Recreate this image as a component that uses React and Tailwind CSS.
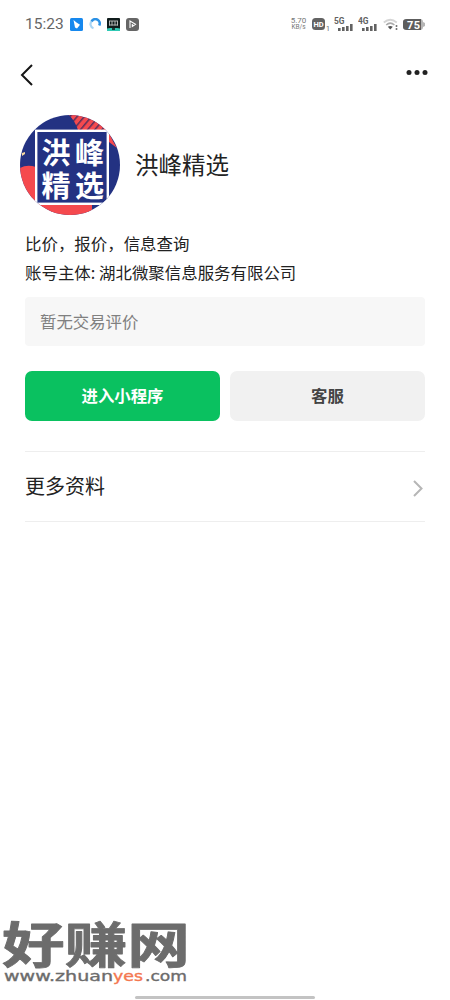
import React from 'react';

const SignalBars = ({ label }) => (
    <svg width="20" height="15" viewBox="0 0 20 15" fill="#626262">
        <text x="0" y="7" fontSize="8.5" fontWeight="700" textLength="10.5" lengthAdjust="spacingAndGlyphs">{label}</text>
        <rect x="4" y="11" width="2.6" height="3" />
        <rect x="8" y="10" width="2.6" height="4" />
        <rect x="12" y="9" width="2.6" height="5" />
        <rect x="16" y="7" width="2.6" height="7" />
    </svg>
);

const StatusBar = () => (
    <div className="flex h-12 items-center justify-between pl-[25px] pr-[25px] text-[#666]">
        <div className="flex items-center">
            <span className="w-[45px] whitespace-nowrap pt-[2px] font-[Roboto] text-[15.5px] leading-none">15:23</span>
            <svg width="13" height="13" viewBox="0 0 13 13">
                <rect width="13" height="13" rx="1.5" fill="#1688ee" />
                <path d="M3.5 2 6.5 4.5 10 6.8 7 10.5 5 9.5Z" fill="#fff" />
            </svg>
            <svg width="12" height="12" viewBox="0 0 12 12" fill="none" className="ml-[6px]">
                <path d="M4.5 10.2A4.2 4.2 0 0 1 3.2 2.8" stroke="#a8d4f4" strokeWidth="2.2" />
                <path d="M2.6 3.4A4.2 4.2 0 0 1 10.2 7.5" stroke="#2b91e5" strokeWidth="2.6" />
            </svg>
            <svg width="13" height="13" viewBox="0 0 13 13" className="ml-[6px]">
                <rect width="13" height="13" rx="1" fill="#101c1c" />
                <path d="M0 13V10.5L3 10H10L13 10.5V13Z" fill="#30c9b5" />
                <path d="M2 3H11M2 7H11M2.5 3V7.5M5 3V7.5M8 3V7.5M10.5 3V7.5" stroke="#c3c3c3" strokeWidth=".9" />
                <path d="M5 10H8V12H5Z" fill="#183d39" />
            </svg>
            <svg width="13" height="13" viewBox="0 0 13 13" fill="none" className="ml-[6px]">
                <rect width="13" height="13" rx="3" fill="#666" />
                <path d="M4 10V3L9.5 6.2 6.3 8.5V6" stroke="#fff" strokeWidth="1.1" />
            </svg>
        </div>
        <div className="flex items-center font-[Roboto]">
            <div className="mr-[1px] w-[17px] text-center text-[8px] leading-[7px] text-[#777]">
                <div>5.70</div>
                <div className="text-[6.5px]">KB/s</div>
            </div>
            <svg width="18" height="15" viewBox="0 0 18 15" className="ml-[4px]" fill="#626262">
                <rect x="0" y="1" width="13" height="12" rx="3.5" />
                <text x="1.5" y="10" fontSize="7.5" fontWeight="700" fill="#fff" textLength="10">HD</text>
                <text x="14" y="14" fontSize="7">1</text>
            </svg>
            <div className="ml-[4px]"><SignalBars label="5G" /></div>
            <div className="ml-[4px]"><SignalBars label="4G" /></div>
            <svg width="16" height="13" viewBox="0 0 16 13" fill="none" className="ml-[5px]">
                <path d="M.8 4.5Q7.2-1 13.8 4.5" stroke="#d5d5d5" strokeWidth="1.8" />
                <path d="M3.2 7Q7.3 3.4 11.4 7" stroke="#aaa" strokeWidth="1.6" />
                <path d="M4.8 8.8Q7.3 7 9.8 8.8L7.3 11.5Z" fill="#555" />
                <path d="M13.5 7V12" stroke="#777" strokeWidth="1.6" strokeDasharray="2 1" />
            </svg>
            <svg width="22" height="13" viewBox="0 0 22 13" className="ml-[4px]">
                <path d="M4 1H17Q20 1 20 4L22 5V8L20 9Q20 12 17 12H4Q0 12 0 9V4Q0 1 4 1Z" fill="#b5b5b5" />
                <path d="M4 1H18V12H4Q0 12 0 9V4Q0 1 4 1Z" fill="#5d5d5d" />
                <text x="4" y="10.5" fontSize="11" fontWeight="700" fill="#fff" textLength="13">75</text>
            </svg>
        </div>
    </div>
);

const Avatar = () => (
    <svg width="100" height="100" viewBox="0 0 100 100" className="shrink-0">
        <defs>
            <clipPath id="avatar"><circle cx="50" cy="50" r="50" /></clipPath>
            <pattern id="stripes" width="5.5" height="5.5" patternUnits="userSpaceOnUse" patternTransform="rotate(40)">
                <rect width="5.5" height="5.5" fill="#f5494e" />
                <rect width="1.5" height="5.5" fill="#5c2f5c" />
            </pattern>
        </defs>
        <g clipPath="url(#avatar)">
            <rect width="100" height="100" fill="#233282" />
            <path d="M49 0H90L86 15H58Q55 6 49 0Z" fill="url(#stripes)" />
            <path d="M0 53Q7 49 16 52V88H72V100H0Z" fill="#f5494e" />
            <path d="M89 18Q93 27 97 33L89 27Z" fill="#f5494e" />
            <path d="m2 38 3-1v2l-3 2Z" fill="#f6d9a0" />
            <rect x="16.2" y="15.8" width="71.6" height="73" fill="#233282" stroke="#fff" strokeWidth="2.4" />
            <g fill="#fff" fontSize="29" fontWeight="700">
                <text x="21.5" y="49" letterSpacing="4.5">洪峰</text>
                <text x="21.5" y="81.5" letterSpacing="4.5">精选</text>
            </g>
        </g>
    </svg>
);

const Watermark = () => (
    <svg width="194" height="90" viewBox="0 -10 194 90" className="absolute bottom-[10px] left-0" fill="#6c6c6c">
        <text x="2" y="52.5" fontSize="49" fontWeight="700" stroke="#6c6c6c" strokeWidth=".8" strokeLinejoin="round" textLength="188" lengthAdjust="spacingAndGlyphs">好赚网</text>
        <g fontFamily="DejaVu Sans" fontSize="13.5" stroke="#6c6c6c" strokeWidth=".35">
            <text x="4" y="71" textLength="109" lengthAdjust="spacingAndGlyphs">www.zhuan</text>
            <text x="113" y="71" fill="#f47750" stroke="#f47750" textLength="30" lengthAdjust="spacingAndGlyphs">yes</text>
            <text x="145" y="71" textLength="42" lengthAdjust="spacingAndGlyphs">.com</text>
        </g>
    </svg>
);

const App = () => {
    return (
        <main className="relative flex h-[1000px] w-[450px] flex-col overflow-hidden bg-white font-['Noto_Sans_CJK_SC',sans-serif] text-[#222]">
            <StatusBar />
            <header className="flex h-[67px] items-start justify-between pl-[20px] pr-[21px] pt-[16px]">
                <svg width="14" height="22" viewBox="0 0 14 22" fill="none" stroke="#151515" strokeWidth="2">
                    <path d="M12 1 2 11 12 21" />
                </svg>
                <svg width="23" height="18" viewBox="0 0 23 18" fill="#222">
                    <circle cx="3" cy="8.5" r="2.5" />
                    <circle cx="11" cy="8.5" r="2.5" />
                    <circle cx="19" cy="8.5" r="2.5" />
                </svg>
            </header>

            <section className="flex items-center gap-[15px] pl-[20px]">
                <Avatar />
                <h1 className="text-[23.5px] leading-none">洪峰精选</h1>
            </section>

            <div className="px-[25px]">
                <div className="pt-[14px] text-[16.45px] leading-[29px]">
                    <p>比价，报价，信息查询</p>
                    <p>账号主体: 湖北微聚信息服务有限公司</p>
                </div>
                <div className="mt-[10px] flex h-[49px] items-center rounded-[4px] bg-[#f7f7f7] pl-[15px] text-[16.4px] text-[#808080]">暂无交易评价</div>
                <div className="mt-[25px] grid grid-cols-2 gap-[10px] text-[16.4px] font-bold">
                    <button className="h-[50px] rounded-[7px] bg-[#0ac160] pb-[2px] text-white">进入小程序</button>
                    <button className="h-[50px] rounded-[7px] bg-[#f1f1f1] pb-[2px] text-[#444]">客服</button>
                </div>
                <div className="mt-[30px] flex h-[71px] items-center justify-between border-y border-[#eee] text-[20px]">
                    <span className="pb-[1px]">更多资料</span>
                    <svg width="13" height="18" viewBox="0 0 13 18" fill="none" stroke="#b6b6b6" strokeWidth="2" className="mt-[2px]">
                        <path d="m2 2 7.5 7.5L2 17" />
                    </svg>
                </div>
            </div>

            <Watermark />
            <div className="mx-auto mb-[1px] mt-auto h-[3px] w-[180px] rounded-full bg-[#c3c3c3]" />
        </main>
    );
};

export default App;
